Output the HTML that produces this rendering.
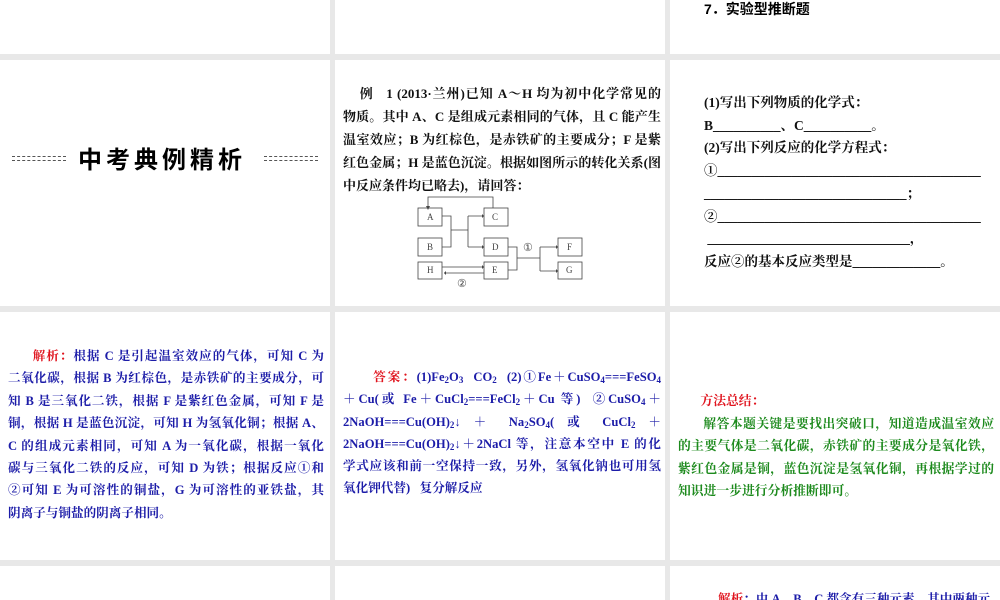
<!DOCTYPE html>
<html><head><meta charset="utf-8"><style>
*{margin:0;padding:0;box-sizing:border-box}
html,body{width:1000px;height:600px;overflow:hidden}
body{background:#e8e8e8;position:relative;font-family:"Liberation Serif","Noto Serif CJK SC",serif}
.p{position:absolute;background:#fff}
.t{position:absolute;white-space:nowrap}
.t div{white-space:nowrap}
.j div{text-align:justify;text-align-last:justify}
.j div.l{text-align-last:left}
.mid{font-size:13.5px;font-weight:bold;color:#111;line-height:23px}
.blue{color:#1c1ca8;font-size:12.6px;font-weight:bold;line-height:22.4px;font-family:"Liberation Serif","Noto Serif CJK SC",serif}
.green{color:#1d8a1d;font-size:12.8px;font-weight:bold;line-height:22.6px;font-family:"Noto Serif CJK SC",serif}
.red{color:#e0141e}
sub{font-size:9px;vertical-align:-2px;line-height:0}
.dash{position:absolute;height:5px;border-top:1px dashed #555;border-bottom:1px dashed #555}
</style></head><body>
<div class="p" style="left:0;top:0;width:330px;height:54px"></div>
<div class="p" style="left:335px;top:0;width:330px;height:54px"></div>
<div class="p" style="left:670px;top:0;width:330px;height:54px"></div>
<div class="p" style="left:0;top:60px;width:330px;height:246px"></div>
<div class="p" style="left:335px;top:60px;width:330px;height:246px"></div>
<div class="p" style="left:670px;top:60px;width:330px;height:246px"></div>
<div class="p" style="left:0;top:312px;width:330px;height:248px"></div>
<div class="p" style="left:335px;top:312px;width:330px;height:248px"></div>
<div class="p" style="left:670px;top:312px;width:330px;height:248px"></div>
<div class="p" style="left:0;top:566px;width:330px;height:34px"></div>
<div class="p" style="left:335px;top:566px;width:330px;height:34px"></div>
<div class="p" style="left:670px;top:566px;width:330px;height:34px"></div>

<div class="t" style="left:704px;top:0;font-size:14px;font-weight:bold;font-family:'Liberation Sans','Noto Sans CJK SC',sans-serif;line-height:18px">7．实验型推断题</div>

<div class="dash" style="left:12px;top:156px;width:54px"></div>
<div class="dash" style="left:264px;top:156px;width:54px"></div>
<div class="t" style="left:78px;top:143px;font-size:24px;font-weight:bold;letter-spacing:4px;font-family:'Noto Sans CJK SC',sans-serif;line-height:30px">中考典例精析</div>

<div class="t mid j" style="left:343px;top:82px;width:318px;font-size:13px">
<div>&nbsp;&nbsp;&nbsp;&nbsp;例&nbsp;&nbsp;&nbsp;1 (2013·兰州)已知 A～H 均为初中化学常见的</div>
<div>物质。其中 A、C 是组成元素相同的气体，且 C 能产生</div>
<div>温室效应；B 为红棕色，是赤铁矿的主要成分；F 是紫</div>
<div>红色金属；H 是蓝色沉淀。根据如图所示的转化关系(图</div>
<div class="l">中反应条件均已略去)，请回答：</div>
</div>
<svg style="position:absolute;left:0;top:0" width="1000" height="600" font-family="Liberation Serif" font-size="9" fill="none" stroke="#444" stroke-width="0.8">
<rect x="418" y="208" width="24" height="18"/><rect x="484" y="208" width="24" height="18"/>
<rect x="418" y="238" width="24" height="18"/><rect x="484" y="238" width="24" height="18"/>
<rect x="418" y="262" width="24" height="17"/><rect x="484" y="262" width="24" height="17"/>
<rect x="558" y="238" width="24" height="18"/><rect x="558" y="262" width="24" height="17"/>
<path d="M493 208V197H428V206"/>
<path d="M442 216H451V247H442M451 230H468M468 216V247M468 216H482M468 247H482"/>
<path d="M508 247H517V270H508M517 258H540M540 247V271M540 247H556M540 271H556"/>
<path d="M442 267H482M484 273H444"/>
<g fill="#444" stroke="none">
<path d="M426 206l2 4 2-4z"/><path d="M482 214l2 2-2 2z"/><path d="M482 245l2 2-2 2z"/>
<path d="M556 245l2 2-2 2z"/><path d="M556 269l2 2-2 2z"/><path d="M482 265l2 2-2 2z"/><path d="M446 271l-2 2 2 2z"/>
<text x="427" y="220">A</text><text x="492" y="220">C</text><text x="427" y="250">B</text><text x="492" y="250">D</text>
<text x="427" y="273">H</text><text x="492" y="273">E</text><text x="567" y="250">F</text><text x="566" y="273">G</text>
<text x="523" y="251" font-size="11">①</text><text x="457" y="287" font-size="11">②</text>
</g>
</svg>

<div class="t mid" style="left:704px;top:92px;font-size:13.5px;line-height:22.7px">
<div>(1)写出下列物质的化学式：</div>
<div>B__________、C__________。</div>
<div>(2)写出下列反应的化学方程式：</div>
<div>①_______________________________________</div>
<div>______________________________；</div>
<div>②_______________________________________</div>
<div>&nbsp;______________________________，</div>
<div>反应②的基本反应类型是_____________。</div>
</div>

<div class="t blue j" style="left:8px;top:345px;width:316px">
<div>&nbsp;&nbsp;&nbsp;&nbsp;&nbsp;&nbsp;<span class="red">解析：</span>根据 C 是引起温室效应的气体，可知 C 为</div>
<div>二氧化碳，根据 B 为红棕色，是赤铁矿的主要成分，可</div>
<div>知 B 是三氧化二铁，根据 F 是紫红色金属，可知 F 是</div>
<div>铜，根据 H 是蓝色沉淀，可知 H 为氢氧化铜；根据 A、</div>
<div>C 的组成元素相同，可知 A 为一氧化碳，根据一氧化</div>
<div>碳与三氧化二铁的反应，可知 D 为铁；根据反应①和</div>
<div>②可知 E 为可溶性的铜盐，G 为可溶性的亚铁盐，其</div>
<div class="l">阴离子与铜盐的阴离子相同。</div>
</div>

<div class="t blue j" style="left:343px;top:366px;width:318px;line-height:22.3px">
<div>&nbsp;&nbsp;&nbsp;&nbsp;&nbsp;&nbsp;<span class="red">答案：</span>(1)Fe<sub>2</sub>O<sub>3</sub>&nbsp;&nbsp;CO<sub>2</sub>&nbsp;&nbsp;(2)①Fe＋CuSO<sub>4</sub>===FeSO<sub>4</sub></div>
<div>＋Cu(或 Fe＋CuCl<sub>2</sub>===FeCl<sub>2</sub>＋Cu 等)&nbsp;&nbsp;②CuSO<sub>4</sub>＋</div>
<div>2NaOH===Cu(OH)<sub>2</sub>↓ ＋ Na<sub>2</sub>SO<sub>4</sub>( 或 CuCl<sub>2</sub> ＋</div>
<div>2NaOH===Cu(OH)<sub>2</sub>↓＋2NaCl 等，注意本空中 E 的化</div>
<div>学式应该和前一空保持一致，另外，氢氧化钠也可用氢</div>
<div class="l">氧化钾代替)&nbsp;&nbsp;&nbsp;复分解反应</div>
</div>

<div class="t green j" style="left:678px;top:389px;width:316px">
<div class="l">&nbsp;&nbsp;&nbsp;&nbsp;&nbsp;&nbsp;&nbsp;<span class="red">方法总结：</span></div>
<div>&nbsp;&nbsp;&nbsp;&nbsp;&nbsp;&nbsp;&nbsp;解答本题关键是要找出突破口，知道造成温室效应</div>
<div>的主要气体是二氧化碳，赤铁矿的主要成分是氧化铁，</div>
<div>紫红色金属是铜，蓝色沉淀是氢氧化铜，再根据学过的</div>
<div class="l">知识进一步进行分析推断即可。</div>
</div>

<div class="t blue" style="left:718px;top:588px"><span class="red">解析</span>：由 A、B、C 都含有三种元素，其中两种元</div>
</body></html>
